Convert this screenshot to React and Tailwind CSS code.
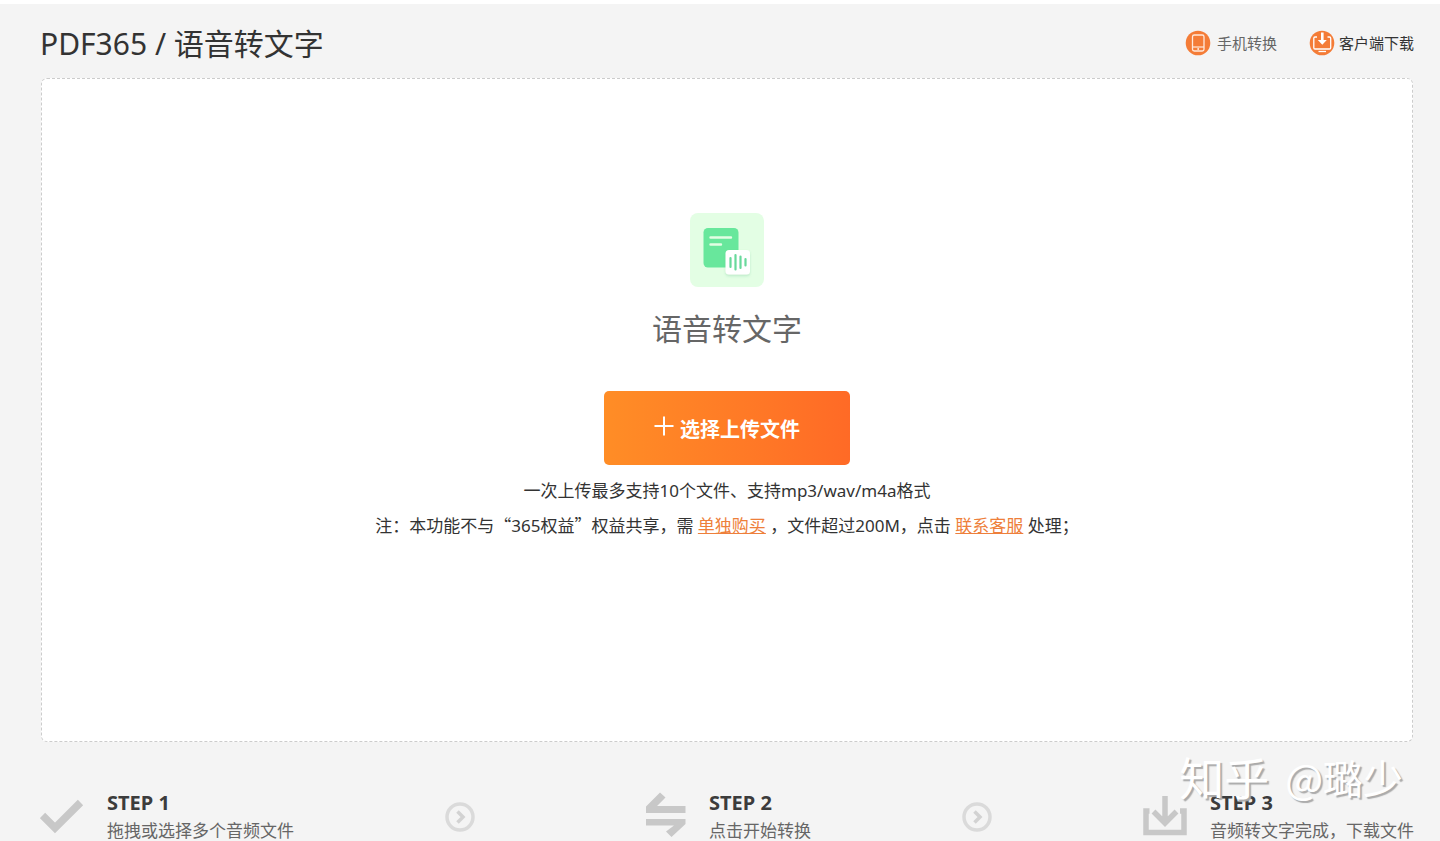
import React from 'react';

const PhoneIcon = () => (
  <svg className="h-[26px] w-[26px] shrink-0" viewBox="0 0 26 26" fill="none" aria-hidden="true">
    <circle cx="13" cy="13" r="12.300" fill="#f47c37" />
    <rect x="7.500" y="5" width="11.500" height="16" rx="1.800" stroke="#ffe9dc" strokeWidth="1.300" />
    <path d="M7.500 17h11.500" stroke="#ffe9dc" strokeWidth="1.200" />
    <circle cx="13.200" cy="19" r="1" fill="#ffe9dc" />
  </svg>
);

const ClientIcon = () => (
  <svg className="h-[26px] w-[26px] shrink-0" viewBox="0 0 26 26" fill="none" aria-hidden="true">
    <circle cx="13" cy="13" r="12.300" fill="#f47c37" />
    <path d="M8 7H6a1.200 1.200 0 0 0-1.200 1.200v9.600A1.200 1.200 0 0 0 6 19h14.500a1.200 1.200 0 0 0 1.200-1.200V8.200A1.200 1.200 0 0 0 20.500 7h-2" stroke="#fff" strokeWidth="1.300" />
    <path d="M9.500 21.500h7.500" stroke="#fff" strokeWidth="1.300" />
    <path d="M12 2.500h2.600v7.500h3.200l-4.500 4.800-4.500-4.800H12z" fill="#fff" />
  </svg>
);

const VoiceIcon = () => (
  <svg className="h-[74px] w-[74px]" viewBox="0 0 74 74" fill="none" aria-hidden="true">
    <defs>
      <filter id="cardShadow" x="-30%" y="-30%" width="160%" height="170%">
        <feDropShadow dx="0" dy="1.5" stdDeviation="1.2" floodColor="#3fae74" floodOpacity="0.25" />
      </filter>
    </defs>
    <rect width="74" height="74" rx="8" fill="#e3fee4" />
    <rect x="13.500" y="15" width="35" height="39.500" rx="4.500" fill="#68e79c" />
    <path d="M20.500 24.500h20.500M20.500 31.500h10.500" stroke="#e3fee4" strokeWidth="2.400" strokeLinecap="round" />
    <rect x="35.500" y="37" width="24.500" height="24.500" rx="3.500" fill="#fff" filter="url(#cardShadow)" />
    <path d="M40.500 45v9M45.500 42v14.500M50.500 43.500v11.500M55.500 46v6.500" stroke="#68d99b" strokeWidth="2.200" strokeLinecap="round" />
  </svg>
);

const CheckIcon = () => (
  <svg className="h-11 w-11 shrink-0" viewBox="0 0 44 44" fill="none" aria-hidden="true">
    <path d="M2.500 20.500l12.500 12.500L40.500 7.500" stroke="#c8c8c8" strokeWidth="7.500" />
  </svg>
);

const SwapIcon = () => (
  <svg className="h-11 w-10 shrink-0 overflow-visible" viewBox="0 0 40 44" aria-hidden="true">
    <path d="M0 11.500L14 -2.500l5.500 5L11 11h28.500v7H0z" fill="#c8c8c8" />
    <path d="M39.500 29L25.500 42l-5.500-5.500 8-6H0v-6.500h39.500z" fill="#c8c8c8" />
  </svg>
);

const DownloadIcon = () => (
  <svg className="h-11 w-11 shrink-0" viewBox="0 0 44 44" fill="none" aria-hidden="true">
    <path d="M6.500 16H3v21.500h38V16h-4" stroke="#c8c8c8" strokeWidth="5.500" />
    <path d="M22 1v25M10.500 16.500L22 28l11.500-11.500" stroke="#c8c8c8" strokeWidth="5.500" />
  </svg>
);

const NextIcon = () => (
  <svg className="h-[30px] w-[30px] shrink-0" viewBox="0 0 30 30" fill="none" aria-hidden="true">
    <circle cx="15" cy="15" r="13" stroke="#dadada" strokeWidth="3.500" />
    <path d="M12.500 9.500l5.500 5.500-5.500 5.500" stroke="#d2d2d2" strokeWidth="3.500" />
  </svg>
);

const Step = ({ icon, title, text, className = '' }) => (
  <li className={`flex items-center gap-[23px] ${className}`}>
    {icon}
    <div>
      <h3 className="text-xl leading-7 font-bold text-[#3c3c3c]">{title}</h3>
      <p className="text-[17px] leading-7 text-[#666]">{text}</p>
    </div>
  </li>
);

const App = () => {
  return (
    <div
      lang="zh-CN"
      className="relative min-h-screen overflow-hidden border-t-4 border-white bg-[#f4f4f4] pr-[26px] pl-10 font-['Noto_Sans','Noto_Sans_CJK_SC',sans-serif] text-[#333]"
    >
      {/* Header */}
      <header className="flex h-[74px] items-center justify-between">
        <h1 className="pt-1.5 text-3xl leading-10">PDF365 / 语音转文字</h1>
        <nav className="flex items-center gap-8 pt-1 text-[15px] leading-6">
          <a href="#mobile" className="flex items-center gap-1.5 text-[#666]">
            <PhoneIcon />
            手机转换
          </a>
          <a href="#client" className="flex items-center gap-1 text-[#333]">
            <ClientIcon />
            客户端下载
          </a>
        </nav>
      </header>

      {/* Upload area */}
      <main className="mr-px ml-px flex h-[664px] flex-col items-center rounded-md border border-dashed border-[#ccc] bg-white pt-[134px]">
        <VoiceIcon />
        <h2 className="mt-[22px] text-3xl leading-10 text-[#666]">语音转文字</h2>
        <button
          type="button"
          className="mt-[42px] flex h-[74px] w-[246px] items-center justify-center gap-1.5 rounded-[5px] bg-linear-to-r from-[#ff8d26] to-[#ff6a26] text-xl font-bold text-white"
        >
          <svg className="mb-1 h-5 w-5" viewBox="0 0 20 20" fill="none" aria-hidden="true">
            <path d="M10 0.500v19M0.500 10h19" stroke="#fff" strokeWidth="2" />
          </svg>
          <span className="pt-1">选择上传文件</span>
        </button>
        <p className="mt-[9px] text-[17px] leading-[34px]">一次上传最多支持10个文件、支持mp3/wav/m4a格式</p>
        <p className="text-[17px] leading-[34px]">
          注：本功能不与<span className="font-['Noto_Sans_CJK_SC',sans-serif]">“</span>365权益
          <span className="font-['Noto_Sans_CJK_SC',sans-serif]">”</span>权益共享，需{' '}
          <a href="#buy" className="text-[#ee7f3b] underline">单独购买</a>{' '}
          ，文件超过200M，点击{' '}
          <a href="#service" className="text-[#ee7f3b] underline">联系客服</a> 处理；
        </p>
      </main>

      {/* Steps */}
      <ol className="flex items-center justify-between pt-[47px]">
        <Step icon={<CheckIcon />} title="STEP 1" text="拖拽或选择多个音频文件" />
        <li><NextIcon /></li>
        <Step icon={<SwapIcon />} title="STEP 2" text="点击开始转换" className="pl-5" />
        <li><NextIcon /></li>
        <Step icon={<DownloadIcon />} title="STEP 3" text="音频转文字完成，下载文件" />
      </ol>

      {/* Watermark */}
      <div className="pointer-events-none absolute right-[37px] bottom-10 flex items-center gap-4 font-['Noto_Sans_CJK_SC',sans-serif] whitespace-nowrap text-white [text-shadow:2px_2px_1px_#aaa]">
        <span className="text-[45px] leading-[56px]">知乎</span>
        <span className="text-[40px] leading-[56px]">@璐少</span>
      </div>
    </div>
  );
};

export default App;
